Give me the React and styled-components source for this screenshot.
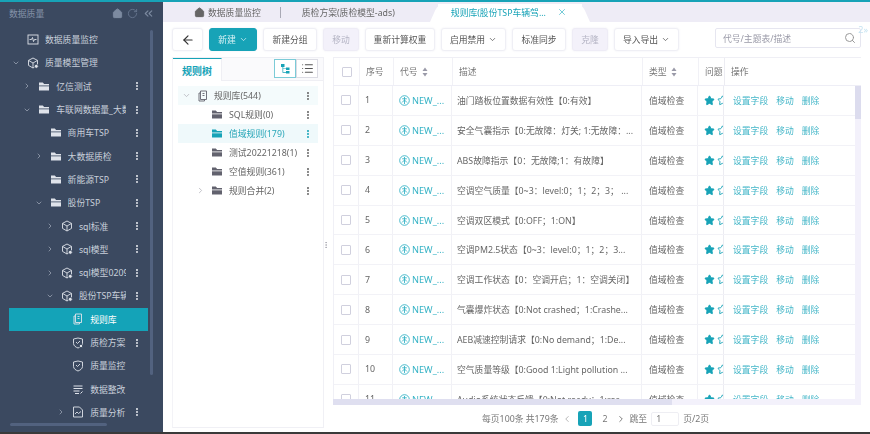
import styled, { createGlobalStyle } from "styled-components";
import { Home, RotateCw, ChevronsLeft, ChevronRight, ChevronDown, MoreVertical, ArrowLeft, Search, X, ChevronLeft, List, Star } from "lucide-react";

const teal = "#17a3b7";

const GlobalStyle = createGlobalStyle`
  html, body { margin: 0; padding: 0; background: #fff; }
  body {
    font-family: "Noto Sans", "Noto Sans CJK SC", sans-serif;
    font-size: 8.8px;
    color: #666;
    text-spacing-trim: space-all;
  }
  * { box-sizing: border-box; }
`;

// page frame
const Page = styled.div`
  width: 870px;
  height: 434px;
  display: flex;
  flex-direction: column;
  overflow: hidden;
  border-top: 2px solid ${teal};
  border-bottom: 2px solid #3a3a3a;
  filter: blur(0.4px);
`;
const Columns = styled.div`
  flex: 1;
  min-height: 0;
  display: flex;
`;

// sidebar
const Sidebar = styled.aside`
  width: 163px;
  flex: none;
  background: #3b4960;
  position: relative;
  display: flex;
  flex-direction: column;
`;
const SideHead = styled.div`
  height: 26px;
  flex: none;
  display: flex;
  align-items: center;
  padding: 0 8px 3px 9px;
  color: #8492a8;
  gap: 4px;
  span { flex: 1; }
`;
const SideList = styled.div`
  margin-left: 9px;
  width: 139px;
`;
const SideRow = styled.div`
  height: 23.3px;
  display: flex;
  align-items: center;
  padding-left: ${(p) => 2 + (p.$depth - 1) * 11.3}px;
  color: ${(p) => (p.$active ? "#fff" : "#c9d0db")};
  background: ${(p) => (p.$active ? "#14a3b8" : "transparent")};
`;
const Arrow = styled.span`
  width: 10px;
  flex: none;
  display: flex;
  justify-content: center;
  color: #aab3c2;
`;
const SideIcon = styled.span`
  width: 12px;
  margin-left: 6px;
  flex: none;
  display: flex;
  justify-content: center;
  color: #dfe3ea;
`;
const SideName = styled.span`
  flex: 1;
  min-width: 0;
  margin-left: 6px;
  white-space: nowrap;
  overflow: hidden;
`;
const SideDots = styled.span`
  width: 22px;
  flex: none;
  display: flex;
  justify-content: center;
  color: #e4e7ec;
`;
const SideScrollY = styled.div`
  position: absolute;
  left: 150px;
  top: 28px;
  width: 3px;
  height: 345px;
  border-radius: 2px;
  background: #52627f;
`;
const SideScrollX = styled.div`
  position: absolute;
  left: 10px;
  top: 421px;
  width: 97px;
  height: 3px;
  border-radius: 2px;
  background: #52627f;
`;

// tabs
const Content = styled.main`
  flex: 1;
  min-width: 0;
  display: flex;
  flex-direction: column;
`;
const TabBar = styled.div`
  height: 20px;
  flex: none;
  display: flex;
  align-items: stretch;
  background: #eeecf6;
  position: relative;
`;
const Tab = styled.div`
  display: flex;
  align-items: center;
  gap: 3px;
  white-space: nowrap;
  color: #666;
  padding: 0 ${(p) => p.$right}px 0 ${(p) => p.$left}px;
`;
const TabDivider = styled.div`
  width: 1px;
  height: 11px;
  align-self: center;
  background: #a9a9b5;
`;
const ActiveTab = styled.div`
  position: relative;
  margin-top: 2px;
  width: 144px;
  display: flex;
  align-items: center;
  justify-content: space-between;
  padding: 0 15px 2px 13px;
  color: ${teal};
  background: #fff;
  white-space: nowrap;
  &::before, &::after {
    content: "";
    position: absolute;
    top: 0;
    bottom: 0;
    width: 14px;
    background: #fff;
  }
  &::before { left: -4px; transform: skewX(-24deg); border-top-left-radius: 6px; }
  &::after { right: -4px; transform: skewX(24deg); border-top-right-radius: 6px; }
  > * { position: relative; z-index: 1; }
`;
const Ghost = styled.span`
  position: absolute;
  right: 2px;
  top: 21px;
  color: #c6e3f1;
  font-size: 9px;
  z-index: 2;
`;

// toolbar
const Toolbar = styled.div`
  height: 35px;
  flex: none;
  display: flex;
  align-items: flex-start;
  gap: 6px;
  padding: 6px 9px 0;
  position: relative;
`;
const ToolButton = styled.button`
  height: 23px;
  width: ${(p) => p.$w}px;
  flex: none;
  display: flex;
  align-items: center;
  justify-content: center;
  gap: 3px;
  padding: 0;
  font: inherit;
  border-radius: 3px;
  color: ${(p) => (p.$primary ? "#d8f2f5" : p.$off ? "#b4b4c4" : "#555")};
  background: ${(p) => (p.$primary ? teal : p.$off ? "#f3f1fa" : "#fff")};
  border: 1px solid ${(p) => (p.$primary ? teal : p.$off ? "#eeecf6" : "#efeff5")};
  box-shadow: 0 0 2px rgba(120, 120, 170, 0.12);
`;
const SearchBox = styled.div`
  margin-left: auto;
  width: 146px;
  height: 20px;
  display: flex;
  align-items: center;
  justify-content: space-between;
  padding: 0 4px 0 7px;
  border: 1px solid #e6e6f0;
  border-radius: 2px;
  color: #9a9aa8;
`;

// left tree panel
const Main = styled.div`
  flex: 1;
  min-height: 0;
  display: flex;
  padding: 0 9px;
`;
const TreePanel = styled.section`
  width: 152px;
  height: 371px;
  flex: none;
  border: 1px solid #f0f0f5;
  border-left-color: #f3f3f7;
  display: flex;
  flex-direction: column;
`;
const TreeHead = styled.div`
  height: 23px;
  flex: none;
  display: flex;
  align-items: stretch;
  background: #fafafc;
  border-bottom: 1px solid #efeff4;
`;
const TreeTab = styled.div`
  width: 49px;
  margin-bottom: -1px;
  display: flex;
  align-items: center;
  justify-content: center;
  font-size: 10px;
  font-weight: 700;
  color: ${teal};
  background: #fff;
  border-top: 1px solid ${teal};
  border-right: 1px solid #efeff4;
`;
const ViewSwitch = styled.div`
  margin-left: auto;
  margin-right: 5px;
  margin-top: 1px;
  display: flex;
  height: 19px;
`;
const ViewButton = styled.div`
  width: 22px;
  display: flex;
  align-items: center;
  justify-content: center;
  border: 1px solid ${(p) => (p.$on ? "#7ccbd7" : "#dcdce4")};
  color: ${(p) => (p.$on ? teal : "#555")};
  background: #fff;
`;
const TreeList = styled.div`
  padding: 5px 5px 0;
`;
const TreeRow = styled.div`
  height: 19px;
  display: flex;
  align-items: center;
  background: ${(p) => (p.$on ? "#eff9fb" : p.$soft ? "#f4fbfc" : "transparent")};
  color: ${(p) => (p.$on ? "#2aa7b9" : "#666")};
`;
const TreeArrow = styled.span`
  width: 14px;
  margin-left: ${(p) => (p.$root ? 1 : 15)}px;
  flex: none;
  display: flex;
  justify-content: center;
  color: #b0b0b8;
`;
const TreeIcon = styled.span`
  width: 12px;
  flex: none;
  margin-left: 4px;
  display: flex;
  justify-content: center;
  color: ${(p) => (p.$on ? teal : "#62626e")};
`;
const TreeName = styled.span`
  flex: 1;
  margin-left: ${(p) => (p.$root ? 5 : 6)}px;
  white-space: nowrap;
`;
const TreeDots = styled.span`
  width: 20px;
  flex: none;
  display: flex;
  justify-content: center;
  color: ${(p) => (p.$on ? teal : "#666")};
`;
const Splitter = styled.div`
  width: 9px;
  height: 375px;
  flex: none;
  display: flex;
  align-items: center;
  justify-content: center;
  padding-right: 6px;
  color: #9a9aa4;
  svg { flex: none; }
`;

// table
const TablePanel = styled.section`
  width: 528px;
  flex: none;
  display: flex;
  flex-direction: column;
`;
const HeadRow = styled.div`
  height: 29px;
  flex: none;
  display: grid;
  grid-template-columns: 26px 34px 59px 190px 56px 26px 137px;
  border-top: 1px solid #efeff5;
  border-bottom: 1px solid #eeeef6;
  border-left: 1px solid #f0f0f6;
  color: #777;
`;
const BodyWrap = styled.div`
  height: 313px;
  flex: none;
  display: flex;
`;
const Rows = styled.div`
  width: 522px;
  flex: none;
  overflow: hidden;
  border-left: 1px solid #f0f0f6;
`;
const DataRow = styled.div`
  height: 29.9px;
  display: grid;
  grid-template-columns: 25px 34px 59px 190px 56px 26px 131px;
  border-bottom: 1px solid #f2f2f7;
`;
const Cell = styled.div`
  display: flex;
  align-items: center;
  min-width: 0;
  overflow: hidden;
  white-space: nowrap;
  padding-left: ${(p) => p.$pad ?? 6}px;
  border-right: 1px solid #f1f1f6;
  ${(p) => p.$fixed && "background: #fff; box-shadow: -1px 0 0 #ececf2; border-right: 0;"}
`;
const Check = styled.span`
  width: 10px;
  height: 10px;
  flex: none;
  border: 1px solid #d0d0de;
  border-radius: 1px;
  background: #fff;
`;
const Sort = styled.svg`
  margin-left: 4px;
  flex: none;
`;
const Code = styled.span`
  margin-left: 2px;
  color: #37b3c6;
  font-size: 9.2px;
`;
const Stars = styled.span`
  display: flex;
  gap: 2px;
  svg { flex: none; }
`;
const ActionLink = styled.a`
  color: #43b6c8;
  margin-right: 8px;
`;
const VTrack = styled.div`
  width: 6px;
  flex: none;
  background: #f3f1fb;
`;
const VThumb = styled.div`
  height: 33px;
  background: #dcdcee;
`;
const HTrack = styled.div`
  height: 6px;
  flex: none;
  background: #f3f1fb;
`;
const HThumb = styled.div`
  width: 339px;
  height: 100%;
  background: #dfdff0;
`;
const Pager = styled.div`
  flex: 1;
  display: flex;
  align-items: center;
  color: #777;
  padding-left: 149px;
`;
const PagerArrow = styled.span`
  display: flex;
  margin: 0 ${(p) => p.$m}px;
  color: ${(p) => p.$color};
`;
const PageOne = styled.span`
  width: 14px;
  height: 15px;
  margin-left: 2px;
  display: flex;
  align-items: center;
  justify-content: center;
  background: ${teal};
  color: #fff;
  border-radius: 2px;
`;
const PageTwo = styled.span`
  margin: 0 8px 0 10px;
`;
const JumpLabel = styled.span`
  margin-left: 4px;
`;
const JumpInput = styled.span`
  width: 28px;
  height: 14px;
  margin: 0 4px;
  padding-left: 4px;
  display: flex;
  align-items: center;
  border: 1px solid #eeeef3;
  border-radius: 2px;
`;

const FolderIcon = () => (
  <svg width="12" height="11" viewBox="0 0 12 11" fill="currentColor">
    <path d="M1 1.5h3.8l1.3 1.4H11v1.5H1z" />
    <path d="M1 5.3h10v4.2H1z" />
  </svg>
);
const CubeIcon = ({ badge }) => (
  <svg width="12" height="12" viewBox="0 0 12 12" fill="none" stroke="currentColor" strokeWidth="0.9">
    <path d="M6 1l4.5 2.4v5L6 11 1.5 8.4v-5z" />
    <path d="M1.5 3.4L6 6l4.5-2.6M6 6v5" />
    {badge && <circle cx="9.3" cy="9.3" r="2" fill="currentColor" stroke="#3b4960" />}
  </svg>
);
const MonitorIcon = () => (
  <svg width="12" height="11" viewBox="0 0 12 11" fill="none" stroke="currentColor" strokeWidth="0.9">
    <rect x="1" y="1" width="10" height="9" />
    <path d="M2.5 5.5h2l1-2 1 4 1-2h2" />
  </svg>
);
const BookIcon = () => (
  <svg width="12" height="12" viewBox="0 0 12 12" fill="none" stroke="currentColor" strokeWidth="0.9">
    <path d="M3.5 1h6v8.5h-6z" />
    <path d="M3.5 3H2v8h5.5V9.500" />
    <path d="M5.500 3.500h2M5.500 5.500h2" />
  </svg>
);
const ShieldIcon = ({ badge }) => (
  <svg width="12" height="12" viewBox="0 0 12 12" fill="none" stroke="currentColor" strokeWidth="0.9">
    <path d="M1.500 2l4.500-1 4.500 1v4.500C10.500 8.800 8 10.300 6 11 4 10.300 1.500 8.800 1.500 6.500z" />
    <path d="M4 5l1.500 1.500L8 4" />
    {badge && <circle cx="9" cy="9" r="1.700" fill="currentColor" stroke="#3b4960" />}
  </svg>
);
const StackIcon = () => (
  <svg width="12" height="11" viewBox="0 0 12 11" fill="none" stroke="currentColor" strokeWidth="1">
    <path d="M1.500 2h9M1.500 4.500h9M1.500 7h6M3 9.500h4" />
    <path d="M8.500 9.500l2-2" />
  </svg>
);
const ReportIcon = () => (
  <svg width="12" height="12" viewBox="0 0 12 12" fill="none" stroke="currentColor" strokeWidth="0.9">
    <path d="M1.500 1h6l3 3v7h-9z" />
    <path d="M3 8l2-2 1.500 1.500L9 5.500" />
  </svg>
);
const TreeViewIcon = () => (
  <svg width="11" height="11" viewBox="0 0 11 11" fill="currentColor">
    <rect x="1" y="1" width="3.500" height="3" />
    <rect x="6" y="4.500" width="3.500" height="2.500" />
    <rect x="6" y="8" width="3.500" height="2.500" />
    <path d="M2.500 4h.7v1.500H6v.6H3.200v3H6v.6H2.500z" />
  </svg>
);
const CodeIcon = () => (
  <svg width="11" height="11" viewBox="0 0 11 11" fill="none" stroke="#37b3c6" strokeWidth="0.9" style={{ flex: "none" }}>
    <circle cx="5.500" cy="5.500" r="4.800" />
    <path d="M5.500 2v7M3 7.500l2.500-2.500 2.500 2.500M3.200 3.800h4.600" />
  </svg>
);
const SortIcon = () => (
  <Sort width="6" height="10" viewBox="0 0 6 10" fill="#9a9aa8">
    <path d="M3 0.500L5.500 4H0.500z" />
    <path d="M3 9.500L0.500 6h5z" />
  </Sort>
);

const sideRows = [
  { depth: 1, name: "数据质量监控", icon: <MonitorIcon /> },
  { depth: 1, name: "质量模型管理", icon: <CubeIcon badge />, open: true, arrow: true },
  { depth: 2, name: "亿信测试", icon: <FolderIcon />, arrow: true, dots: true },
  { depth: 2, name: "车联网数据量_大数据质检", icon: <FolderIcon />, open: true, arrow: true, dots: true },
  { depth: 3, name: "商用车TSP", icon: <FolderIcon />, dots: true },
  { depth: 3, name: "大数据质检", icon: <FolderIcon />, arrow: true, dots: true },
  { depth: 3, name: "新能源TSP", icon: <FolderIcon />, dots: true },
  { depth: 3, name: "股份TSP", icon: <FolderIcon />, open: true, arrow: true, dots: true },
  { depth: 4, name: "sql标准", icon: <CubeIcon />, arrow: true, dots: true },
  { depth: 4, name: "sql模型", icon: <CubeIcon badge />, arrow: true, dots: true },
  { depth: 4, name: "sql模型0209", icon: <CubeIcon badge />, arrow: true, dots: true },
  { depth: 4, name: "股份TSP车辆驾驶", icon: <CubeIcon badge />, open: true, arrow: true, dots: true },
  { depth: 5, name: "规则库", icon: <BookIcon />, active: true },
  { depth: 5, name: "质检方案", icon: <ShieldIcon badge />, dots: true },
  { depth: 5, name: "质量监控", icon: <ShieldIcon /> },
  { depth: 5, name: "数据整改", icon: <StackIcon /> },
  { depth: 5, name: "质量分析", icon: <ReportIcon />, arrow: true, dots: true },
];

const treeRows = [
  { name: "规则库(544)", root: true, soft: true },
  { name: "SQL规则(0)" },
  { name: "值域规则(179)", on: true },
  { name: "测试20221218(1)" },
  { name: "空值规则(361)" },
  { name: "规则合并(2)", arrow: true },
];

const descs = [
  "油门踏板位置数据有效性【0:有效】",
  "安全气囊指示【0:无故障：灯关; 1:无故障：...",
  "ABS故障指示【0：无故障;1：有故障】",
  "空调空气质量【0~3：level:0；1；2；3； ...",
  "空调双区模式【0:OFF；1:ON】",
  "空调PM2.5状态【0~3：level:0；1；2；3...",
  "空调工作状态【0：空调开启；1：空调关闭】",
  "气囊爆炸状态【0:Not crashed；1:Crashe...",
  "AEB减速控制请求【0:No demand；1:De...",
  "空气质量等级【0:Good 1:Light pollution ...",
  "Audio系统状态反馈【0:Not ready；1:rea...",
];

export default function App() {
  return (
    <>
      <GlobalStyle />
      <Page>
        <Columns>
          <Sidebar>
            <SideHead>
              <span>数据质量</span>
              <Home size={11} fill="#7c8aa0" color="#7c8aa0" />
              <RotateCw size={11} color="#66758e" />
              <ChevronsLeft size={13} color="#7c8aa0" />
            </SideHead>
            <SideList>
              {sideRows.map((row) => (
                <SideRow key={row.name} $depth={row.depth} $active={row.active}>
                  <Arrow>
                    {row.arrow && (row.open ? <ChevronDown size={8} /> : <ChevronRight size={8} />)}
                  </Arrow>
                  <SideIcon>{row.icon}</SideIcon>
                  <SideName>{row.name}</SideName>
                  <SideDots>{row.dots && <MoreVertical size={10} strokeWidth={3} />}</SideDots>
                </SideRow>
              ))}
            </SideList>
            <SideScrollY />
            <SideScrollX />
          </Sidebar>

          <Content>
            <TabBar>
              <Tab $left={31} $right={19}>
                <Home size={11} fill="#666" />
                数据质量监控
              </Tab>
              <TabDivider />
              <Tab $left={21} $right={43}>质检方案(质检模型-ads)</Tab>
              <ActiveTab>
                <span>规则库(股份TSP车辆驾...</span>
                <X size={10} color="#5cc0cf" />
              </ActiveTab>
              <Ghost>2»</Ghost>
            </TabBar>

            <Toolbar>
              <ToolButton $w={31}><ArrowLeft size={14} color="#333" /></ToolButton>
              <ToolButton $w={48} $primary>新建 <ChevronDown size={9} /></ToolButton>
              <ToolButton $w={54}>新建分组</ToolButton>
              <ToolButton $w={36} $off>移动</ToolButton>
              <ToolButton $w={70}>重新计算权重</ToolButton>
              <ToolButton $w={65}>启用禁用 <ChevronDown size={9} /></ToolButton>
              <ToolButton $w={54}>标准同步</ToolButton>
              <ToolButton $w={36} $off>克隆</ToolButton>
              <ToolButton $w={65}>导入导出 <ChevronDown size={9} /></ToolButton>
              <SearchBox>
                代号/主题表/描述
                <Search size={12} color="#999" />
              </SearchBox>
            </Toolbar>

            <Main>
              <TreePanel>
                <TreeHead>
                  <TreeTab>规则树</TreeTab>
                  <ViewSwitch>
                    <ViewButton $on><TreeViewIcon /></ViewButton>
                    <ViewButton><List size={13} /></ViewButton>
                  </ViewSwitch>
                </TreeHead>
                <TreeList>
                  {treeRows.map((row) => (
                    <TreeRow key={row.name} $on={row.on} $soft={row.soft}>
                      <TreeArrow $root={row.root}>
                        {row.root && <ChevronDown size={9} />}
                        {row.arrow && <ChevronRight size={9} />}
                      </TreeArrow>
                      <TreeIcon $on={row.on}>
                        {row.root ? <BookIcon /> : <FolderIcon />}
                      </TreeIcon>
                      <TreeName $root={row.root}>{row.name}</TreeName>
                      <TreeDots $on={row.on}><MoreVertical size={10} strokeWidth={3} /></TreeDots>
                    </TreeRow>
                  ))}
                </TreeList>
              </TreePanel>

              <Splitter><MoreVertical size={8} /></Splitter>

              <TablePanel>
                <HeadRow>
                  <Cell $pad={8}><Check /></Cell>
                  <Cell>序号</Cell>
                  <Cell>代号<SortIcon /></Cell>
                  <Cell>描述</Cell>
                  <Cell>类型<SortIcon /></Cell>
                  <Cell>问题</Cell>
                  <Cell $fixed>操作</Cell>
                </HeadRow>
                <BodyWrap>
                  <Rows>
                    {descs.map((desc, i) => (
                      <DataRow key={desc}>
                        <Cell $pad={7}><Check /></Cell>
                        <Cell $pad={6}>{i + 1}</Cell>
                        <Cell $pad={6}><CodeIcon /><Code>NEW_...</Code></Cell>
                        <Cell $pad={5}>{desc}</Cell>
                        <Cell $pad={7}>值域检查</Cell>
                        <Cell $pad={6}>
                          <Stars>
                            <Star size={11} fill={teal} color={teal} />
                            <Star size={11} color={teal} />
                          </Stars>
                        </Cell>
                        <Cell $fixed $pad={9}>
                          <ActionLink>设置字段</ActionLink>
                          <ActionLink>移动</ActionLink>
                          <ActionLink>删除</ActionLink>
                        </Cell>
                      </DataRow>
                    ))}
                  </Rows>
                  <VTrack><VThumb /></VTrack>
                </BodyWrap>
                <HTrack><HThumb /></HTrack>
                <Pager>
                  每页100条 共179条
                  <PagerArrow $color="#aaa" $m={4}><ChevronLeft size={10} /></PagerArrow>
                  <PageOne>1</PageOne>
                  <PageTwo>2</PageTwo>
                  <PagerArrow $color="#666" $m={0}><ChevronRight size={10} /></PagerArrow>
                  <JumpLabel>跳至</JumpLabel>
                  <JumpInput>1</JumpInput>
                  页/2页
                </Pager>
              </TablePanel>
            </Main>
          </Content>
        </Columns>
      </Page>
    </>
  );
}
